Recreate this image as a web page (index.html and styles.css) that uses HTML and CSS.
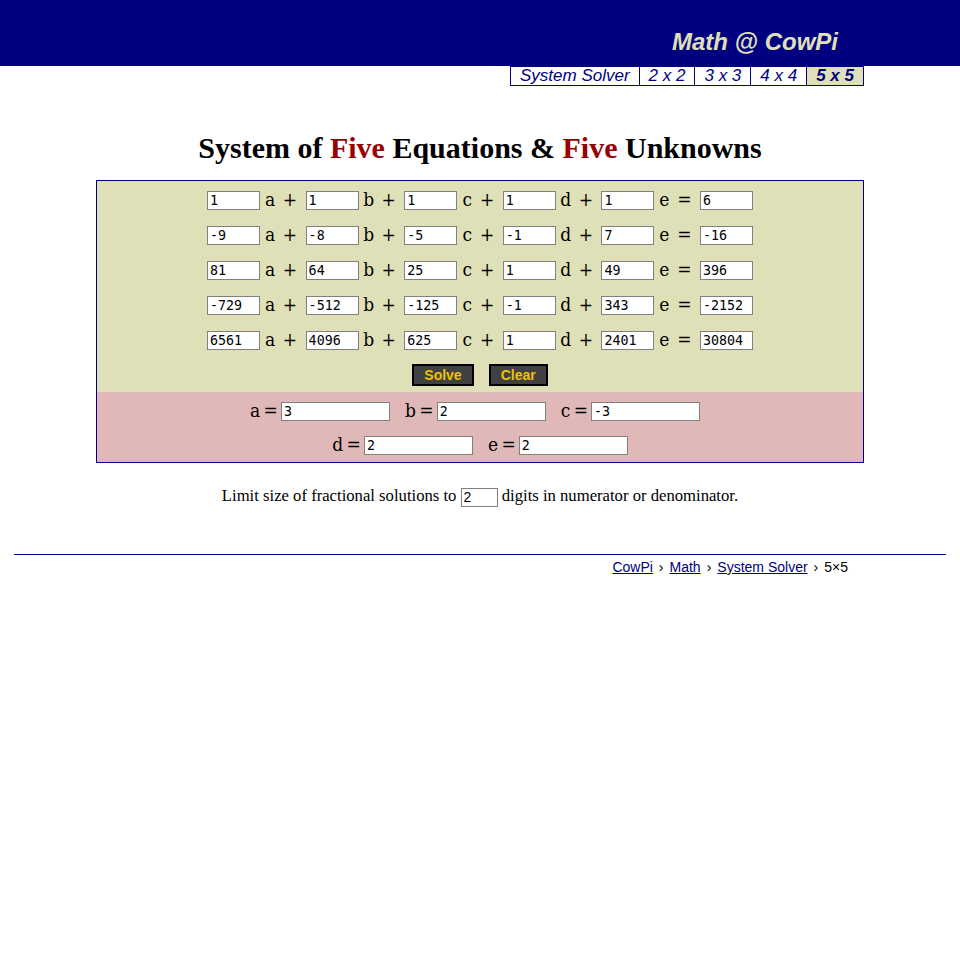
FILE: index.html
```html
<!DOCTYPE html>
<html lang="en">
<head>
<meta charset="utf-8">
<title>System of Five Equations &amp; Five Unknowns</title>
<link rel="stylesheet" href="styles.css">
</head>
<body>
<header class="topbar">
  <div class="topbar-inner"><span class="site-title">Math @ CowPi</span></div>
</header>
<nav class="nav-wrap">
  <div class="navbar">
    <a class="nav-item">System Solver</a>
    <a class="nav-item">2 x 2</a>
    <a class="nav-item">3 x 3</a>
    <a class="nav-item">4 x 4</a>
    <a class="nav-item nav-active">5 x 5</a>
  </div>
</nav>

<h1 class="page-title">System of <span class="hl">Five</span> Equations &amp; <span class="hl">Five</span> Unknowns</h1>

<section class="solver">
  <div class="equations">
    <div class="eq-row">
      <input class="coef" value="1"><span class="var">a</span><span class="op">+</span>
      <input class="coef" value="1"><span class="var">b</span><span class="op">+</span>
      <input class="coef" value="1"><span class="var">c</span><span class="op">+</span>
      <input class="coef" value="1"><span class="var">d</span><span class="op">+</span>
      <input class="coef" value="1"><span class="var">e</span><span class="op">=</span>
      <input class="coef" value="6">
    </div>
    <div class="eq-row">
      <input class="coef" value="-9"><span class="var">a</span><span class="op">+</span>
      <input class="coef" value="-8"><span class="var">b</span><span class="op">+</span>
      <input class="coef" value="-5"><span class="var">c</span><span class="op">+</span>
      <input class="coef" value="-1"><span class="var">d</span><span class="op">+</span>
      <input class="coef" value="7"><span class="var">e</span><span class="op">=</span>
      <input class="coef" value="-16">
    </div>
    <div class="eq-row">
      <input class="coef" value="81"><span class="var">a</span><span class="op">+</span>
      <input class="coef" value="64"><span class="var">b</span><span class="op">+</span>
      <input class="coef" value="25"><span class="var">c</span><span class="op">+</span>
      <input class="coef" value="1"><span class="var">d</span><span class="op">+</span>
      <input class="coef" value="49"><span class="var">e</span><span class="op">=</span>
      <input class="coef" value="396">
    </div>
    <div class="eq-row">
      <input class="coef" value="-729"><span class="var">a</span><span class="op">+</span>
      <input class="coef" value="-512"><span class="var">b</span><span class="op">+</span>
      <input class="coef" value="-125"><span class="var">c</span><span class="op">+</span>
      <input class="coef" value="-1"><span class="var">d</span><span class="op">+</span>
      <input class="coef" value="343"><span class="var">e</span><span class="op">=</span>
      <input class="coef" value="-2152">
    </div>
    <div class="eq-row">
      <input class="coef" value="6561"><span class="var">a</span><span class="op">+</span>
      <input class="coef" value="4096"><span class="var">b</span><span class="op">+</span>
      <input class="coef" value="625"><span class="var">c</span><span class="op">+</span>
      <input class="coef" value="1"><span class="var">d</span><span class="op">+</span>
      <input class="coef" value="2401"><span class="var">e</span><span class="op">=</span>
      <input class="coef" value="30804">
    </div>
    <div class="btn-row">
      <button class="btn">Solve</button>
      <button class="btn">Clear</button>
    </div>
  </div>
  <div class="results">
    <div class="res-row res-row-first">
      <span class="res-group"><span class="rlabel">a =</span><input class="res" value="3"></span>
      <span class="res-group"><span class="rlabel">b =</span><input class="res" value="2"></span>
      <span class="res-group"><span class="rlabel">c =</span><input class="res" value="-3"></span>
    </div>
    <div class="res-row res-row-last">
      <span class="res-group"><span class="rlabel">d =</span><input class="res" value="2"></span>
      <span class="res-group"><span class="rlabel">e =</span><input class="res" value="2"></span>
    </div>
  </div>
</section>

<p class="limit">Limit size of fractional solutions to <input class="limit-input" value="2"> digits in numerator or denominator.</p>

<footer class="footer">
  <div class="crumbs">
    <a class="crumb-link">CowPi</a><span class="sep">›</span><a class="crumb-link">Math</a><span class="sep">›</span><a class="crumb-link">System Solver</a><span class="sep">›</span><span class="crumb-cur">5×5</span>
  </div>
</footer>
</body>
</html>
```
FILE: styles.css
```css
html, body {
  margin: 0;
  padding: 0;
  background: #ffffff;
}

body {
  font-family: "Liberation Serif", "Times New Roman", serif;
  color: #000;
}

/* Header */
.topbar {
  background: #000080;
  height: 66px;
}

.topbar-inner {
  width: 768px;
  margin: 0 auto;
  box-sizing: border-box;
  padding: 28px 26px 0 0;
  text-align: right;
}

.site-title {
  font-family: "Liberation Sans", Arial, sans-serif;
  font-style: italic;
  font-weight: bold;
  font-size: 24px;
  line-height: 28px;
  color: #e0e0b8;
}

/* Nav */
.nav-wrap {
  width: 768px;
  margin: 0 auto;
  display: flex;
  justify-content: flex-end;
}

.navbar {
  display: flex;
  border: 1px solid #000080;
}

.nav-item {
  font-family: "Liberation Sans", Arial, sans-serif;
  font-style: italic;
  font-size: 17px;
  line-height: 18px;
  color: #000080;
  padding: 0 9px;
  text-decoration: none;
  border-left: 1px solid #000080;
}

.nav-item:first-child {
  border-left: none;
}

.nav-active {
  background: #e0e0b8;
  font-weight: bold;
}

/* Title */
.page-title {
  font-family: "Liberation Serif", "Times New Roman", serif;
  font-weight: bold;
  font-size: 30px;
  line-height: 34px;
  text-align: center;
  margin: 45px 0 15px;
}

.hl {
  color: #990000;
}

/* Solver box */
.solver {
  width: 768px;
  box-sizing: border-box;
  margin: 0 auto;
  border: 1px solid #000080;
}

.equations {
  background: #e0e0b8;
  padding-top: 2px;
}

.eq-row {
  height: 35px;
  display: flex;
  justify-content: center;
  align-items: center;
}

.coef {
  width: 53px;
  height: 19px;
  box-sizing: border-box;
  border: 1px solid #808080;
  padding: 0 2px;
  margin: 0;
  font-family: "DejaVu Sans Mono", monospace;
  font-size: 13.33px;
  color: #000;
  background: #fff;
}

.var, .op {
  font-family: "DejaVu Serif Condensed", "DejaVu Serif", serif;
  font-stretch: condensed;
  font-size: 19px;
  width: 20px;
  text-align: center;
  line-height: 22px;
  margin-top: -4px;
}

.op {
  margin-right: 5.6px;
}

.btn-row {
  height: 34px;
  display: flex;
  justify-content: center;
  align-items: center;
  gap: 15px;
}

.btn {
  height: 22px;
  box-sizing: border-box;
  border: 2px solid #000;
  background: #404040;
  color: #f0c000;
  font-family: "Liberation Sans", Arial, sans-serif;
  font-weight: bold;
  font-size: 14px;
  padding: 0 10px;
  margin: 0;
}

.results {
  background: #e0b8b8;
  padding-top: 2px;
}

.res-row {
  height: 35px;
  display: flex;
  justify-content: center;
  align-items: center;
  gap: 15px;
}

.res-row-first {
  padding-right: 10px;
}

.res-row-last {
  height: 33px;
}

.res-group {
  display: flex;
  align-items: center;
}

.rlabel {
  font-family: "DejaVu Serif Condensed", "DejaVu Serif", serif;
  font-stretch: condensed;
  font-size: 19px;
  line-height: 22px;
  margin-top: -4px;
  margin-right: 3px;
  word-spacing: -2px;
  white-space: nowrap;
}

.res {
  width: 109px;
  height: 19px;
  box-sizing: border-box;
  border: 1px solid #808080;
  padding: 0 2px;
  margin: 0;
  font-family: "DejaVu Sans Mono", monospace;
  font-size: 13.33px;
  color: #000;
  background: #fff;
}

/* Limit line */
.limit {
  margin: 23px 0 0;
  font-size: 16.67px;
  line-height: 20px;
  text-align: center;
}

.limit-input {
  width: 37px;
  height: 19px;
  box-sizing: border-box;
  border: 1px solid #808080;
  padding: 0 2px;
  margin: 0;
  vertical-align: middle;
  font-family: "Liberation Sans", Arial, sans-serif;
  font-size: 14px;
  color: #000;
}

/* Footer */
.footer {
  margin: 47px 14px 0;
  border-top: 1px solid #000080;
  padding-top: 2px;
}

.crumbs {
  width: 768px;
  margin: 0 auto;
  box-sizing: border-box;
  padding-right: 16px;
  text-align: right;
  font-family: "Liberation Sans", Arial, sans-serif;
  font-size: 14px;
  line-height: 20px;
}

.crumb-link {
  color: #000080;
  text-decoration: underline;
}

.sep {
  padding: 0 6px;
}

.crumb-cur {
  color: #000;
}
```
